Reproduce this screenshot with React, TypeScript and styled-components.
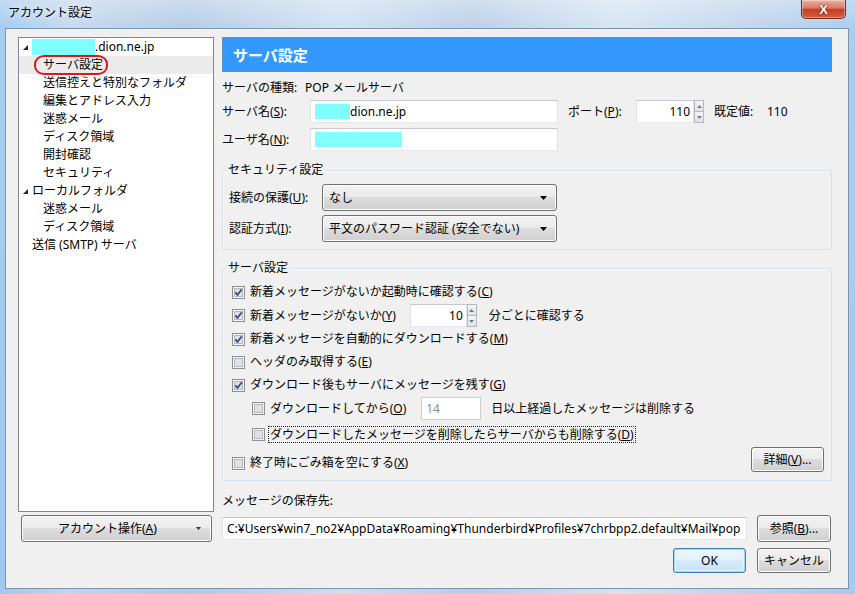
import React from "react";
import styled, { createGlobalStyle } from "styled-components";

const Global = createGlobalStyle`
  *, *::before, *::after { box-sizing: border-box; }
  html, body { margin: 0; padding: 0; }
  body {
    width: 855px;
    height: 594px;
    overflow: hidden;
    font-family: "Noto Sans", "Noto Sans CJK JP", sans-serif;
    font-size: 12px;
    color: #000;
  }
`;

const Window = styled.div`
  width: 855px;
  height: 594px;
  display: flex;
  flex-direction: column;
  padding: 0 6px 5px 5px;
  background:
    linear-gradient(180deg, rgba(255,255,255,0.35) 0px, rgba(255,255,255,0.08) 28px, rgba(255,255,255,0) 100%),
    linear-gradient(90deg, #9fc8f0 0%, #c0d6ed 8%, #b0c9e4 22%, #cddff1 40%, #b7cde6 55%, #d3e3f3 72%, #bed3ea 88%, #a4c9ef 100%);
`;

const TitleBar = styled.div`
  height: 28px;
  flex: none;
  display: flex;
  justify-content: space-between;
  align-items: flex-start;
  padding-left: 3px;
`;

const Title = styled.span`
  margin-top: 5px;
  line-height: 16px;
  color: #000;
  text-shadow: 0 0 6px rgba(255, 255, 255, 0.95);
`;

const CloseButton = styled.div`
  width: 45px;
  height: 19px;
  margin-right: 3px;
  display: flex;
  align-items: center;
  justify-content: center;
  border: 1px solid #6f2c1f;
  border-top: none;
  border-radius: 0 0 5px 5px;
  background: linear-gradient(180deg, #eab1a3 0%, #da7a64 45%, #c43e22 52%, #d0603f 100%);
  box-shadow: inset 0 0 0 1px rgba(255, 255, 255, 0.35);
  color: #fff;
  font-family: "Liberation Sans", sans-serif;
  font-weight: bold;
  font-size: 13px;
  line-height: 1;
  text-shadow: 0 0 2px #5a1a0c, 0 0 1px #5a1a0c;
`;

const Client = styled.div`
  flex: 1;
  min-height: 0;
  background: #f0f0f0;
  border: 1px solid #7d94ae;
  padding: 8px 16px 15px 12px;
  display: grid;
  grid-template-columns: 196px 610px;
  grid-template-rows: 1fr auto auto;
  column-gap: 8px;
`;

/* ---------- tree ---------- */

const Tree = styled.div`
  min-height: 0;
  overflow: hidden;
  background: #fff;
  border: 1px solid #828790;
`;

const TreeRow = styled.div<{ $indent: number; $selected?: boolean }>`
  height: 18px;
  display: flex;
  align-items: center;
  padding-left: ${(p) => p.$indent}px;
  background: ${(p) => (p.$selected ? "#ebebeb" : "transparent")};
  line-height: 18px;
  white-space: nowrap;
`;

const Twisty = styled.svg`
  flex: none;
  width: 5px;
  height: 5px;
  margin-right: 4px;
`;

const Circled = styled.span`
  position: relative;
  &::after {
    content: "";
    position: absolute;
    left: -9px;
    right: -5px;
    top: -1px;
    bottom: -1px;
    border: 2px solid #e31616;
    border-radius: 10px / 9px;
  }
`;

const Redact = styled.span<{ $w: number; $h: number }>`
  display: inline-block;
  flex: none;
  width: ${(p) => p.$w}px;
  height: ${(p) => p.$h}px;
  background: #80ffff;
`;

/* ---------- right pane ---------- */

const RightPane = styled.div`
  min-height: 0;
  display: flex;
  flex-direction: column;
`;

const Header = styled.div`
  flex: none;
  height: 35px;
  display: flex;
  align-items: center;
  padding-left: 10px;
  background: #3399ff;
  border: 1px solid #6e8cab;
  color: #fff;
  font-weight: bold;
  font-size: 15px;
`;

const Row = styled.div<{ $mt?: number; $h?: number }>`
  flex: none;
  display: flex;
  align-items: center;
  height: ${(p) => p.$h ?? 23}px;
  margin-top: ${(p) => p.$mt ?? 0}px;
  white-space: nowrap;
`;

const Label = styled.span<{ $w?: number; $ml?: number; $disabled?: boolean }>`
  flex: none;
  width: ${(p) => (p.$w ? `${p.$w}px` : "auto")};
  margin-left: ${(p) => p.$ml ?? 0}px;
  line-height: 16px;
  white-space: nowrap;
  color: ${(p) => (p.$disabled ? "#8d8d8d" : "#000")};
`;

const Field = styled.div<{ $w?: number; $right?: boolean; $disabled?: boolean; $ml?: number }>`
  flex: ${(p) => (p.$w ? "none" : "1 1 auto")};
  width: ${(p) => (p.$w ? `${p.$w}px` : "auto")};
  min-width: 0;
  height: 23px;
  margin-left: ${(p) => p.$ml ?? 0}px;
  display: flex;
  align-items: center;
  justify-content: ${(p) => (p.$right ? "flex-end" : "flex-start")};
  padding: 0 3px 0 4px;
  background: #fff;
  border: 1px solid;
  border-color: ${(p) => (p.$disabled ? "#cdcdcd" : "#c3c7ce #e2e3ea #e3e9ef #e2e3ea")};
  color: ${(p) => (p.$disabled ? "#8d8d8d" : "#000")};
  line-height: 16px;
  white-space: nowrap;
  overflow: hidden;
`;

const SpinBox = styled.div`
  flex: none;
  width: 10px;
  height: 23px;
  display: flex;
  flex-direction: column;
`;

const SpinHalf = styled.div`
  flex: 1;
  display: flex;
  align-items: center;
  justify-content: center;
  border: 1px solid #b5b8bd;
  background: linear-gradient(180deg, #f6f6f6, #e1e1e1);
  & + & {
    border-top: none;
  }
`;

const Spinner = () => (
  <SpinBox>
    <SpinHalf>
      <svg width="5" height="3" viewBox="0 0 5 3">
        <polygon points="2.5,0 5,3 0,3" fill="#6b7a8f" />
      </svg>
    </SpinHalf>
    <SpinHalf>
      <svg width="5" height="3" viewBox="0 0 5 3">
        <polygon points="0,0 5,0 2.5,3" fill="#6b7a8f" />
      </svg>
    </SpinHalf>
  </SpinBox>
);

const Group = styled.fieldset<{ $mt: number; $pl: number; $pb: number; $pt: number }>`
  flex: none;
  margin: ${(p) => p.$mt}px 0 0 0;
  min-width: 0;
  padding: ${(p) => p.$pt}px 7px ${(p) => p.$pb}px ${(p) => p.$pl}px;
  border: 1px solid #d5dfe5;
  border-radius: 3px;
  box-shadow: inset 1px 1px 0 #fafafa;
  display: flex;
  flex-direction: column;
`;

const Legend = styled.legend<{ $ml: number }>`
  padding: 0 2px;
  margin-left: ${(p) => p.$ml}px;
  line-height: 16px;
`;

const Select = styled.div<{ $w: number }>`
  flex: none;
  width: ${(p) => p.$w}px;
  height: 27px;
  display: flex;
  align-items: center;
  justify-content: space-between;
  padding: 0 6px 0 6px;
  border: 1px solid #707070;
  border-radius: 3px;
  background: linear-gradient(180deg, #f2f2f2 0%, #ebebeb 49%, #dddddd 50%, #cfcfcf 100%);
  box-shadow: inset 0 0 0 1px #fcfcfc;
  line-height: 16px;
  white-space: nowrap;
`;

const ArrowSvg = styled.svg<{ $mr: number }>`
  flex: none;
  margin-right: ${(p) => p.$mr}px;
`;

const SelectArrow = () => (
  <ArrowSvg $mr={3} width="7" height="4" viewBox="0 0 7 4">
    <polygon points="0,0 7,0 3.5,4" fill="#000" />
  </ArrowSvg>
);

const CheckRow = styled.div<{ $indent?: boolean; $h?: number; $mt?: number }>`
  flex: none;
  display: flex;
  align-items: center;
  height: ${(p) => p.$h ?? 22}px;
  margin-top: ${(p) => p.$mt ?? 0}px;
  padding-left: ${(p) => (p.$indent ? 20 : 0)}px;
  white-space: nowrap;
`;

const CheckSvg = styled.svg`
  flex: none;
  width: 13px;
  height: 13px;
  margin-right: 5px;
`;

const CheckBox = ({ checked }: { checked?: boolean }) => (
  <CheckSvg viewBox="0 0 13 13">
    <rect x="0.5" y="0.5" width="12" height="12" fill="#f4f4f4" stroke="#8e8f8f" />
    <rect x="2.5" y="2.5" width="8" height="8" fill="#dfe1e4" stroke="#b5b9bf" />
    {checked && (
      <path d="M3.3 6.3 L5.5 8.9 L9.8 3.3" fill="none" stroke="#3a4d86" strokeWidth="1.8" />
    )}
  </CheckSvg>
);

const FocusText = styled.span`
  display: inline-block;
  margin-left: -2px;
  padding: 0 1px;
  border: 1px dotted #222;
  line-height: 15px;
`;

const GroupRows = styled.div`
  display: flex;
  flex-direction: column;
  gap: 1px;
`;

const FooterRow = styled.div`
  flex: none;
  display: flex;
  justify-content: space-between;
  align-items: flex-end;
  margin-top: 2px;
  height: 25px;
`;

const Button = styled.div<{ $w: number; $h?: number; $default?: boolean }>`
  flex: none;
  width: ${(p) => p.$w}px;
  height: ${(p) => p.$h ?? 25}px;
  display: flex;
  align-items: center;
  justify-content: center;
  border: 1px solid ${(p) => (p.$default ? "#3c7fb1" : "#707070")};
  border-radius: 3px;
  background: ${(p) =>
    p.$default
      ? "linear-gradient(180deg, #eef7fd 0%, #e3f2fc 49%, #d4ebfa 50%, #c5e3f7 100%)"
      : "linear-gradient(180deg, #f2f2f2 0%, #ebebeb 49%, #dddddd 50%, #cfcfcf 100%)"};
  box-shadow: ${(p) =>
    p.$default ? "inset 0 0 0 1px #9fd8f5, inset 0 0 0 2px #e6f5fd" : "inset 0 0 0 1px #fcfcfc"};
  line-height: 16px;
  white-space: nowrap;
`;

const AccountButton = styled(Button)`
  margin: 3px 0 0 3px;
  justify-content: space-between;
  padding: 0 10px 0 36px;
`;

const PathRow = styled.div`
  display: flex;
  align-items: center;
  gap: 10px;
  margin-top: 3px;
  padding-right: 1px;
  height: 27px;
`;

const ButtonBar = styled.div`
  grid-column: 2;
  display: flex;
  justify-content: flex-end;
  gap: 11px;
  margin-top: 6px;
  padding-right: 1px;
`;

export default function App() {
  return (
    <>
      <Global />
      <Window>
        <TitleBar>
          <Title>アカウント設定</Title>
          <CloseButton>X</CloseButton>
        </TitleBar>
        <Client>
          <Tree>
            <TreeRow $indent={4}>
              <Twisty viewBox="0 0 5 5">
                <polygon points="5,0 5,5 0,5" fill="#262626" />
              </Twisty>
              <Redact $w={63} $h={16} />
              <span>.dion.ne.jp</span>
            </TreeRow>
            <TreeRow $indent={24} $selected>
              <Circled>サーバ設定</Circled>
            </TreeRow>
            <TreeRow $indent={24}>送信控えと特別なフォルダ</TreeRow>
            <TreeRow $indent={24}>編集とアドレス入力</TreeRow>
            <TreeRow $indent={24}>迷惑メール</TreeRow>
            <TreeRow $indent={24}>ディスク領域</TreeRow>
            <TreeRow $indent={24}>開封確認</TreeRow>
            <TreeRow $indent={24}>セキュリティ</TreeRow>
            <TreeRow $indent={4}>
              <Twisty viewBox="0 0 5 5">
                <polygon points="5,0 5,5 0,5" fill="#262626" />
              </Twisty>
              <span>ローカルフォルダ</span>
            </TreeRow>
            <TreeRow $indent={24}>迷惑メール</TreeRow>
            <TreeRow $indent={24}>ディスク領域</TreeRow>
            <TreeRow $indent={13}>送信 (SMTP) サーバ</TreeRow>
          </Tree>

          <RightPane>
            <Header>サーバ設定</Header>
            <Row $mt={8} $h={16}>
              <Label>サーバの種類:</Label>
              <Label $ml={8}>POP メールサーバ</Label>
            </Row>
            <Row $mt={4}>
              <Label $w={88}>
                サーバ名(<u>S</u>):
              </Label>
              <Field $w={248}>
                <Redact $w={35} $h={15} />
                <span>dion.ne.jp</span>
              </Field>
              <Label $w={68} $ml={10}>
                ポート(<u>P</u>):
              </Label>
              <Field $w={58} $right>
                110
              </Field>
              <Spinner />
              <Label $w={53} $ml={10}>
                既定値:
              </Label>
              <Label>110</Label>
            </Row>
            <Row $mt={5}>
              <Label $w={88}>
                ユーザ名(<u>N</u>):
              </Label>
              <Field $w={248}>
                <Redact $w={87} $h={15} />
              </Field>
            </Row>

            <Group $mt={11} $pl={6} $pt={6} $pb={7}>
              <Legend $ml={-3}>セキュリティ設定</Legend>
              <Row $h={27}>
                <Label $w={93}>
                  接続の保護(<u>U</u>):
                </Label>
                <Select $w={235}>
                  <span>なし</span>
                  <SelectArrow />
                </Select>
              </Row>
              <Row $h={27} $mt={4}>
                <Label $w={93}>
                  認証方式(<u>I</u>):
                </Label>
                <Select $w={235}>
                  <span>平文のパスワード認証 (安全でない)</span>
                  <SelectArrow />
                </Select>
              </Row>
            </Group>

            <Group $mt={10} $pl={9} $pt={5} $pb={8}>
              <Legend $ml={-6}>サーバ設定</Legend>
              <GroupRows>
                <CheckRow>
                  <CheckBox checked />
                  <Label>
                    新着メッセージがないか起動時に確認する(<u>C</u>)
                  </Label>
                </CheckRow>
                <CheckRow $h={23}>
                  <CheckBox checked />
                  <Label>
                    新着メッセージがないか(<u>Y</u>)
                  </Label>
                  <Field $w={57} $right $ml={14}>
                    10
                  </Field>
                  <Spinner />
                  <Label $ml={12}>分ごとに確認する</Label>
                </CheckRow>
                <CheckRow>
                  <CheckBox checked />
                  <Label>
                    新着メッセージを自動的にダウンロードする(<u>M</u>)
                  </Label>
                </CheckRow>
                <CheckRow>
                  <CheckBox />
                  <Label>
                    ヘッダのみ取得する(<u>E</u>)
                  </Label>
                </CheckRow>
                <CheckRow>
                  <CheckBox checked />
                  <Label>
                    ダウンロード後もサーバにメッセージを残す(<u>G</u>)
                  </Label>
                </CheckRow>
                <CheckRow $indent $h={23}>
                  <CheckBox />
                  <Label>
                    ダウンロードしてから(<u>O</u>)
                  </Label>
                  <Field $w={60} $disabled $ml={15}>
                    14
                  </Field>
                  <Label $ml={10}>日以上経過したメッセージは削除する</Label>
                </CheckRow>
                <CheckRow $indent $mt={2}>
                  <CheckBox />
                  <FocusText>
                    ダウンロードしたメッセージを削除したらサーバからも削除する(<u>D</u>)
                  </FocusText>
                </CheckRow>
              </GroupRows>
              <FooterRow>
                <CheckRow $h={18}>
                  <CheckBox />
                  <Label>
                    終了時にごみ箱を空にする(<u>X</u>)
                  </Label>
                </CheckRow>
                <Button $w={73}>
                  詳細(<u>V</u>)...
                </Button>
              </FooterRow>
            </Group>

            <Row $mt={12} $h={16}>
              <Label>メッセージの保存先:</Label>
            </Row>
          </RightPane>

          <AccountButton $w={191} $h={27}>
            <span>
              アカウント操作(<u>A</u>)
            </span>
            <ArrowSvg $mr={0} width="5" height="3" viewBox="0 0 5 3">
              <polygon points="0,0 5,0 2.5,3" fill="#333" />
            </ArrowSvg>
          </AccountButton>

          <PathRow>
            <Field>
              C:¥Users¥win7_no2¥AppData¥Roaming¥Thunderbird¥Profiles¥7chrbpp2.default¥Mail¥pop
            </Field>
            <Button $w={74} $h={27}>
              参照(<u>B</u>)...
            </Button>
          </PathRow>

          <ButtonBar>
            <Button $w={73} $default>
              OK
            </Button>
            <Button $w={74}>キャンセル</Button>
          </ButtonBar>
        </Client>
      </Window>
    </>
  );
}
